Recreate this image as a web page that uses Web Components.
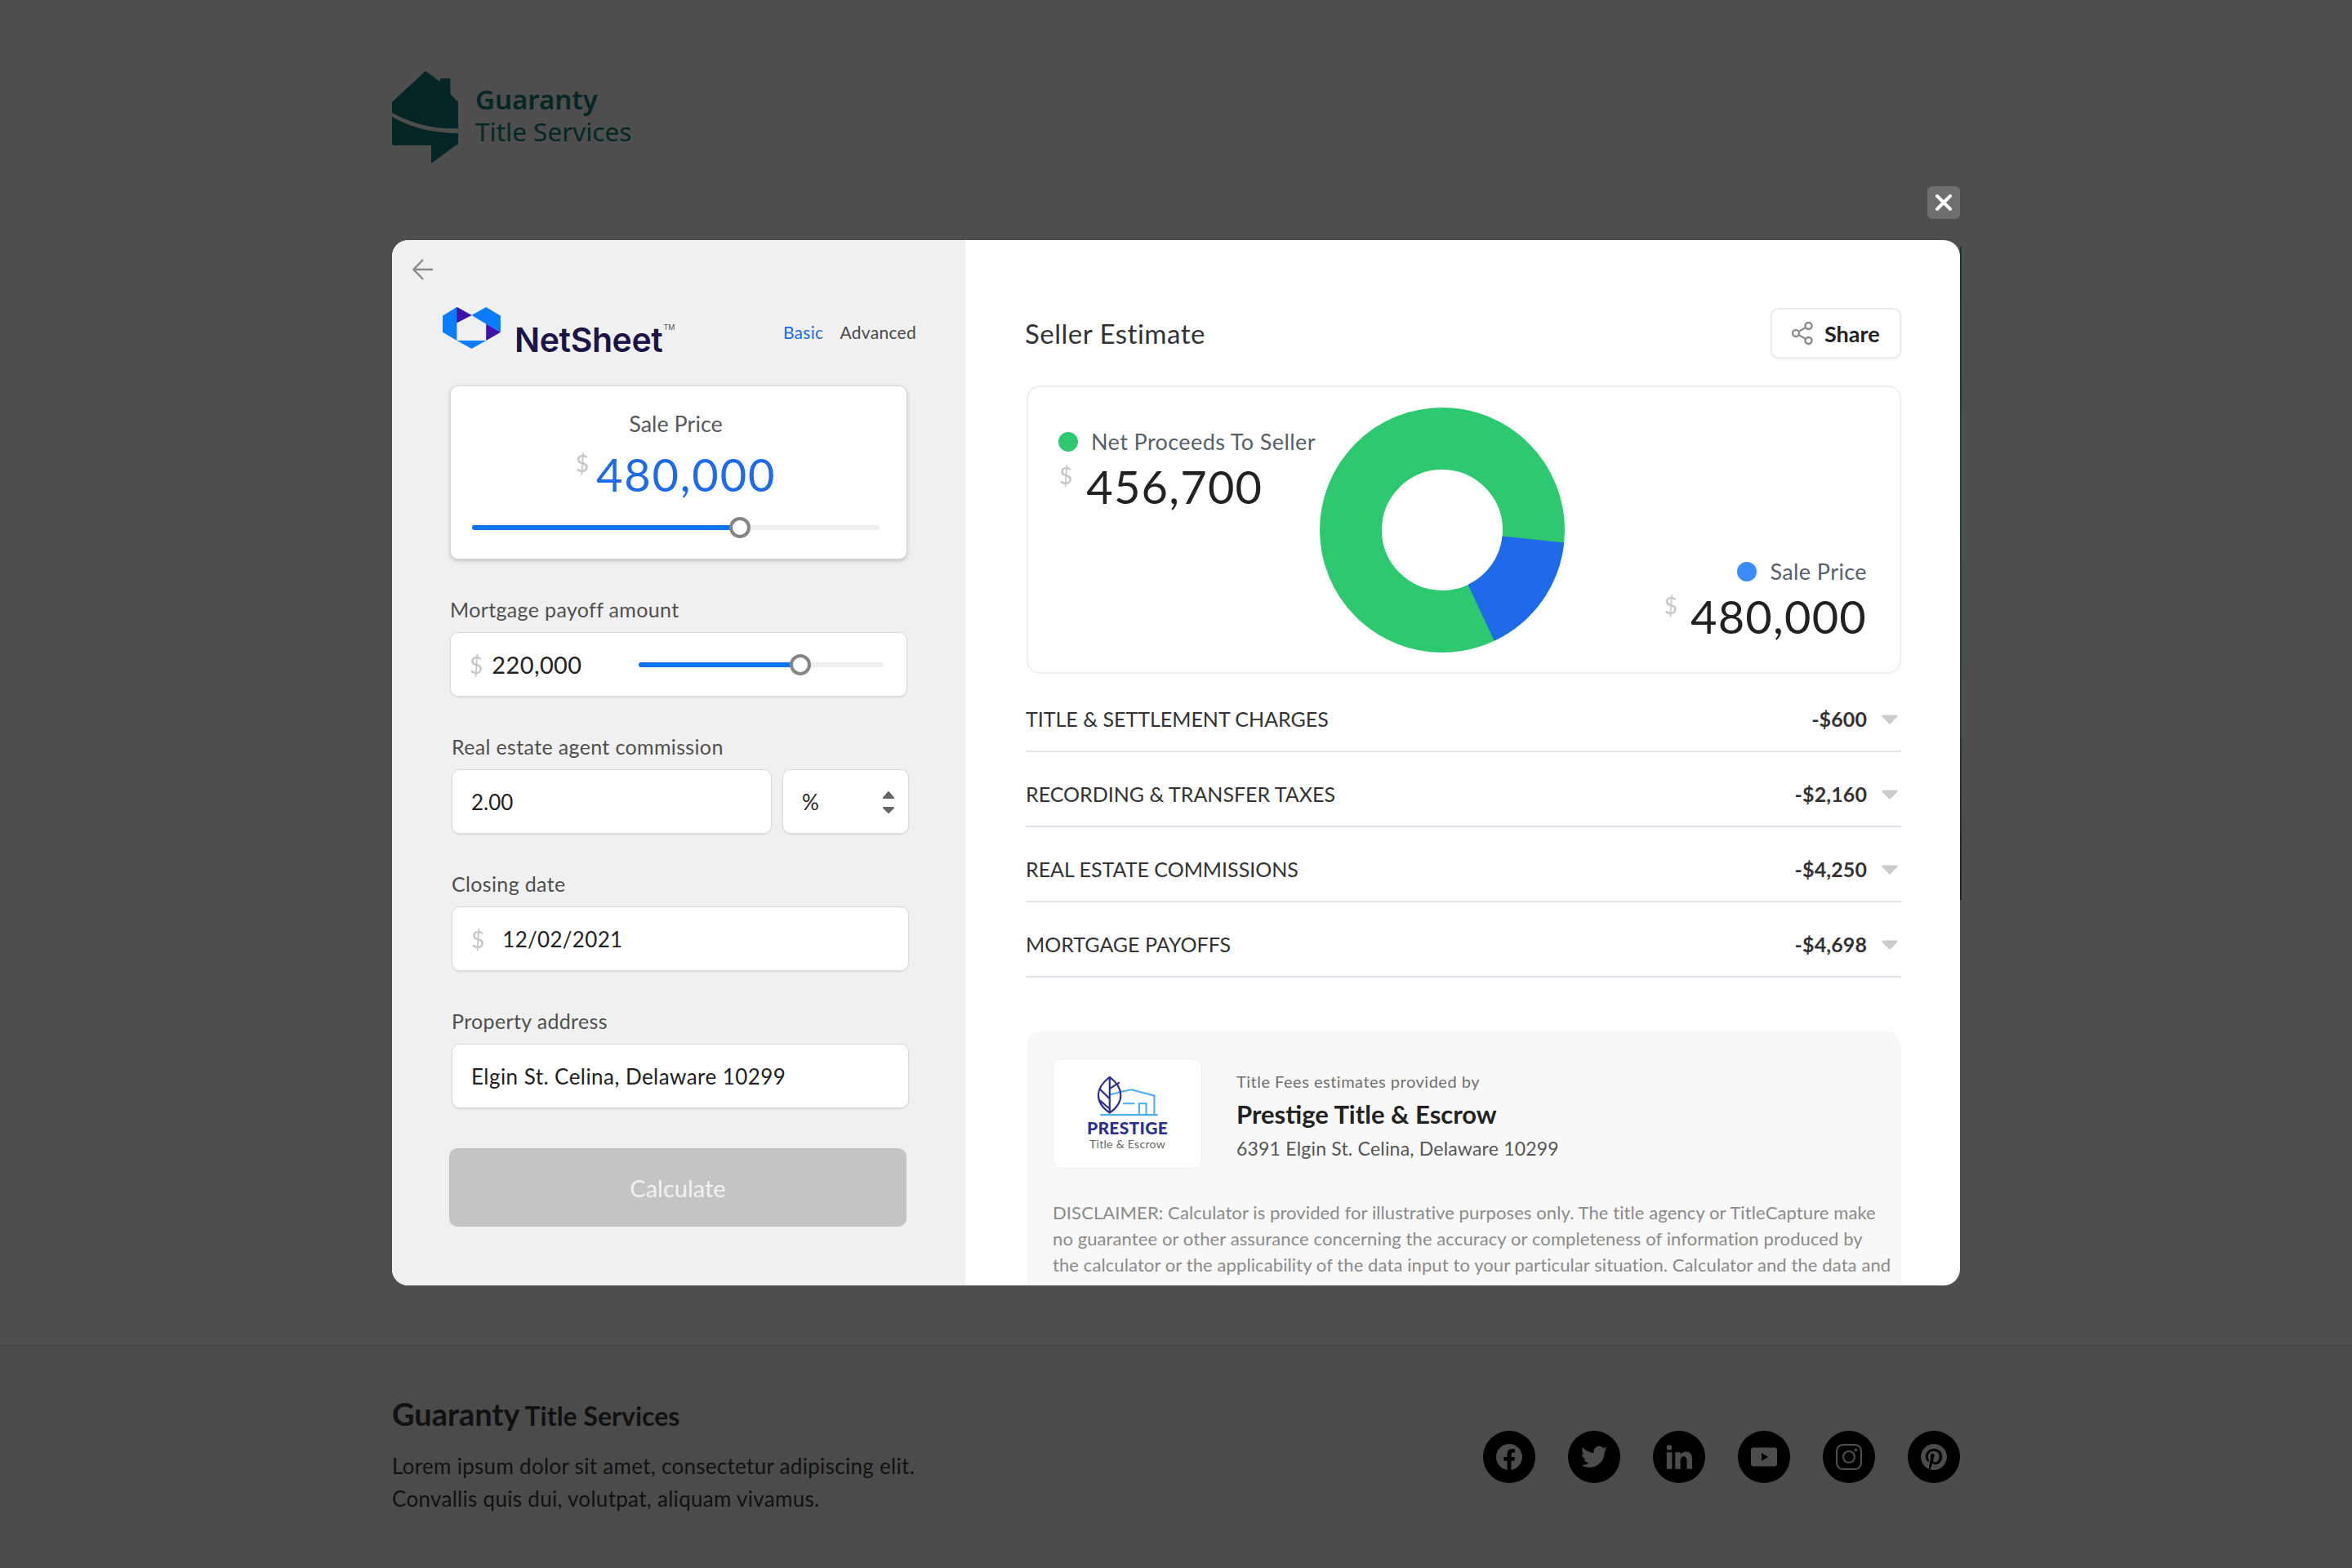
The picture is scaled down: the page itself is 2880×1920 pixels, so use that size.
<!DOCTYPE html>
<html lang="en">
<head>
<meta charset="utf-8">
<title>NetSheet</title>
<style>
  html, body { margin: 0; padding: 0; }
  body { background: #4e4e4e; font-family: "Lato", "Liberation Sans", sans-serif; width: 2880px; height: 1920px; overflow: hidden; }
</style>
</head>
<body>
<site-header></site-header>
<net-modal>
  <calc-panel slot="left"></calc-panel>
  <estimate-panel slot="right"></estimate-panel>
</net-modal>
<site-footer></site-footer>

<script>
// top of the page behind the modal
class SiteHeader extends HTMLElement {
  constructor() {
    super();
    this.attachShadow({ mode: 'open' });
  }
  connectedCallback() {
    this.shadowRoot.innerHTML = `
      <style>
        :host { display: flex; box-sizing: border-box; width: 1920px; height: 294px; margin: 0 auto; padding-top: 87px; }
        svg.logo { display: block; width: 81px; height: 113px; }
        .name { margin: 15px 0 0 21px; font-family: "Noto Sans", sans-serif; color: #052624; line-height: 39px; }
        .name b { display: block; font-size: 33px; font-weight: 600; }
        .name span { display: block; font-size: 31.5px; font-weight: 400; }
        .close { margin: auto 0 26px auto; width: 40px; height: 40px; border-radius: 6px; background: #6f6f6f; display: flex; align-items: center; justify-content: center; }
      </style>
      <svg class="logo" viewBox="0 0 81 113">
        <path fill="#052624" d="M41 0 59 13V10a1 1 0 0 1 1-1H70a1.500 1.500 0 0 1 1.500 1.500V28L81 38V70C60 71 30 68 0 51V38Z"/>
        <path fill="#052624" d="M0 56C30 73 60 76 81 76V88a3 3 0 0 1-3 3L48 113V91H3a3 3 0 0 1-3-3Z"/>
      </svg>
      <div class="name"><b>Guaranty</b><span>Title Services</span></div>
      <div class="close">
        <svg width="20" height="20" viewBox="0 0 20 20"><path d="M2 2 18 18M18 2 2 18" stroke="#fff" stroke-width="4" stroke-linecap="round"/></svg>
      </div>
    `;
  }
}
customElements.define('site-header', SiteHeader);

// the white two column dialog
class NetModal extends HTMLElement {
  constructor() {
    super();
    this.attachShadow({ mode: 'open' });
  }
  connectedCallback() {
    this.shadowRoot.innerHTML = `
      <style>
        :host { display: block; position: relative; width: 1920px; height: 1280px; margin: 0 auto; }
        .box { display: flex; height: 100%; border-radius: 20px; overflow: hidden; background: #fff; }
        .left { flex: 0 0 702px; background: #f0f0f0; }
        .right { flex: 1; min-width: 0; }
        .sliver { position: absolute; left: 100%; top: 8px; width: 2px; height: 800px; background: linear-gradient(#1b3634, #2f4341 60%, #262626); }
      </style>
      <div class="box">
        <div class="left"><slot name="left"></slot></div>
        <div class="right"><slot name="right"></slot></div>
      </div>
      <div class="sliver"></div>
    `;
  }
}
customElements.define('net-modal', NetModal);

class RangeSlider extends HTMLElement {
  constructor() {
    super();
    this.attachShadow({ mode: 'open' });
  }
  connectedCallback() {
    const value = this.getAttribute('value');
    this.shadowRoot.innerHTML = `
      <style>
        :host { display: block; position: relative; height: 6px; border-radius: 3px; background: #eeeeee; }
        .fill { height: 100%; width: ${value}%; border-radius: 3px; background: #0d74f0; }
        .thumb { position: absolute; left: ${value}%; top: 50%; box-sizing: border-box; width: 26px; height: 26px; margin: -13px 0 0 -13px; border: 4px solid #858585; border-radius: 50%; background: #fff; }
      </style>
      <div class="fill"></div>
      <div class="thumb"></div>
    `;
  }
}
customElements.define('range-slider', RangeSlider);

// labelled white input box, content passed through the slot
class FormField extends HTMLElement {
  constructor() {
    super();
    this.attachShadow({ mode: 'open' });
  }
  connectedCallback() {
    this.shadowRoot.innerHTML = `
      <style>
        :host { display: block; margin-top: 46px; }
        .label { font-size: 25px; line-height: 30px; margin-bottom: 13px; color: #4f4f4f; letter-spacing: .35px; }
        .row { display: flex; gap: 13px; }
      </style>
      <div class="label">${this.getAttribute('label')}</div>
      <div class="row"><slot></slot></div>
    `;
  }
}
customElements.define('form-field', FormField);

class InputBox extends HTMLElement {
  constructor() {
    super();
    this.attachShadow({ mode: 'open' });
  }
  connectedCallback() {
    this.shadowRoot.innerHTML = `
      <style>
        :host { flex: 1; box-sizing: border-box; display: flex; align-items: center; height: 79px; padding: 0 23px; border: 1px solid #d9d9d9; border-radius: 10px; background: #fff; box-shadow: 0 1px 2px rgba(0,0,0,.08); font-size: 26px; color: #222; }
      </style>
      <slot></slot>
    `;
  }
}
customElements.define('input-box', InputBox);

class CalcPanel extends HTMLElement {
  constructor() {
    super();
    this.attachShadow({ mode: 'open' });
  }
  connectedCallback() {
    this.shadowRoot.innerHTML = `
      <style>
        :host { display: block; box-sizing: border-box; height: 1280px; padding: 23px 71px 0 71px; }
        .back { display: block; width: 26px; height: 26px; margin-left: -46px; }
        .brand { display: flex; align-items: flex-start; height: 51px; margin: 33px -11px 0 -9px; }
        .brand svg { width: 71px; height: 51px; flex: none; }
        .word { margin-left: 17px; font-family: "Inter", sans-serif; font-size: 41px; line-height: 50px; font-weight: 600; color: #1b1446; letter-spacing: -.4px; }
        .tm { font-size: 9px; font-weight: 400; color: #555; vertical-align: 27px; letter-spacing: 0; margin-left: 1px; }
        .tabs { margin-left: auto; display: flex; gap: 20px; padding-top: 18px; font-size: 21px; line-height: 26px; letter-spacing: .3px; color: #4a4a4a; }
        .tabs .on { color: #1f6aeb; }
        .sale { box-sizing: border-box; height: 213px; margin-top: 45px; padding: 30px 33px 0 26px; border: 1px solid #d6d6d6; border-radius: 10px; background: #fff; box-shadow: 0 2px 5px rgba(0,0,0,.2); text-align: center; }
        .sale .t { font-size: 27px; line-height: 32px; color: #55595c; }
        .sale .v { display: flex; justify-content: center; margin-top: 13px; font-size: 56px; line-height: 66px; color: #1f6aeb; letter-spacing: 1.8px; }
        .cur { color: #c6c6c6; font-weight: 400; letter-spacing: 0; }
        .sale .cur { font-size: 28px; line-height: 34px; margin: 2px 9px 0 0; }
        .sale range-slider { margin-top: 29px; }
        .inner-cur { font-size: 28px; }
        .field-b { margin-left: 2px; margin-right: -2px; }
        .amount { font-size: 29px; margin-left: 11px; width: 180px; letter-spacing: .4px; }
        .flexslider { flex: 1; margin-right: 5px; }
        .unit { flex: 0 0 155px; padding-right: 16px; }
        .unit svg { margin-left: auto; }
        .date { margin-left: 22px; letter-spacing: .3px; }
        .addr { letter-spacing: .45px; }
        .calc { box-sizing: border-box; height: 96px; margin: 49px 0 0 -1px; width: 560px; display: flex; align-items: center; justify-content: center; border-radius: 10px; background: #c4c4c4; color: #f2f2f2; font-size: 29px; }
      </style>
      <svg class="back" viewBox="0 0 26 26"><path d="M25 13H2M13 1 1.500 13 13 25" fill="none" stroke="#8a8a8a" stroke-width="2.400"/></svg>
      <div class="brand">
        <svg viewBox="36 48 212 152">
          <path fill="#0a7cff" d="M88 48 36 80V140L88 170 142 200 195 170 195 110 248 140V80L195 48 142 78Z"/>
          <path fill="#f0f0f0" d="M88 105 142 78 195 110V170H88Z"/>
          <path fill="#3d12a8" d="M88 48 142 78 88 105ZM195 110 248 140 195 170Z"/>
        </svg>
        <div class="word">NetSheet<span class="tm">TM</span></div>
        <div class="tabs"><span class="on">Basic</span><span>Advanced</span></div>
      </div>
      <div class="sale">
        <div class="t">Sale Price</div>
        <div class="v"><span class="cur">$</span><span>480,000</span></div>
        <range-slider value="65.8"></range-slider>
      </div>
      <form-field label="Mortgage payoff amount">
        <input-box>
          <span class="cur inner-cur">$</span>
          <span class="amount">220,000</span>
          <range-slider class="flexslider" value="66"></range-slider>
        </input-box>
      </form-field>
      <form-field class="field-b" label="Real estate agent commission">
        <input-box>2.00</input-box>
        <input-box class="unit">%
          <svg width="16" height="28" viewBox="0 0 16 28"><path d="M8 2 14 9H2ZM2 21H14L8 27Z" fill="#666" stroke="#666" stroke-width="2" stroke-linejoin="round"/></svg>
        </input-box>
      </form-field>
      <form-field class="field-b" label="Closing date">
        <input-box><span class="cur inner-cur">$</span><span class="date">12/02/2021</span></input-box>
      </form-field>
      <form-field class="field-b" label="Property address">
        <input-box><span class="addr">Elgin St. Celina, Delaware 10299</span></input-box>
      </form-field>
      <div class="calc">Calculate</div>
    `;
  }
}
customElements.define('calc-panel', CalcPanel);

class DonutCard extends HTMLElement {
  constructor() {
    super();
    this.attachShadow({ mode: 'open' });
  }
  connectedCallback() {
    this.shadowRoot.innerHTML = `
      <style>
        :host { display: flex; box-sizing: border-box; height: 353px; padding: 25px 40px 25px 37px; border: 2px solid #efefef; border-radius: 16px; background: #fff; }
        .tag { display: flex; align-items: center; gap: 16px; font-size: 27px; line-height: 32px; color: #57606a; letter-spacing: .4px; }
        .dot { width: 24px; height: 24px; border-radius: 50%; }
        .num { display: flex; font-size: 56px; line-height: 66px; color: #222; letter-spacing: 1.2px; }
        .cur { font-size: 28px; line-height: 34px; color: #c6c6c6; letter-spacing: 0; }
        .net { flex: 0 0 320px; padding-top: 26px; }
        .net .num { margin-top: 6px; }
        .net .cur { margin: 2px 17px 0 1px; }
        svg { flex: none; width: 300px; height: 300px; }
        .sale { margin-left: auto; align-self: flex-end; padding-bottom: 10px; }
        .sale .tag { justify-content: flex-end; }
        .sale .cur { margin: 2px 16px 0 0; }
        .sale .num { margin-top: 6px; }
      </style>
      <div class="net">
        <div class="tag"><span class="dot" style="background:#2dc86f"></span>Net Proceeds To Seller</div>
        <div class="num"><span class="cur">$</span><span>456,700</span></div>
      </div>
      <svg viewBox="0 0 300 300">
        <circle cx="150" cy="150" r="112" fill="none" stroke="#2dc86f" stroke-width="76"/>
        <path fill="#1f6aeb" d="M299.200 165.400A150 150 0 0 1 213.800 285.700L181.500 216.900A74 74 0 0 0 223.600 157.600Z"/>
      </svg>
      <div class="sale">
        <div class="tag"><span class="dot" style="background:#3b8cf7"></span>Sale Price</div>
        <div class="num"><span class="cur">$</span><span>480,000</span></div>
      </div>
    `;
  }
}
customElements.define('donut-card', DonutCard);

class FeeRow extends HTMLElement {
  constructor() {
    super();
    this.attachShadow({ mode: 'open' });
  }
  connectedCallback() {
    this.shadowRoot.innerHTML = `
      <style>
        :host { display: flex; box-sizing: border-box; height: 92px; padding-top: 36px; border-bottom: 2px solid #e3e3ef; font-size: 25px; line-height: 30px; color: #333; }
        .amt { margin-left: auto; font-weight: 700; letter-spacing: .1px; }
        svg { margin: 10px 4px 0 18px; }
      </style>
      <slot></slot>
      <span class="amt">${this.getAttribute('amount')}</span>
      <svg width="20" height="12" viewBox="0 0 20 12"><path d="M2 2H18L10 10Z" fill="#ccc" stroke="#ccc" stroke-width="3" stroke-linejoin="round"/></svg>
    `;
  }
}
customElements.define('fee-row', FeeRow);

class ProviderCard extends HTMLElement {
  constructor() {
    super();
    this.attachShadow({ mode: 'open' });
  }
  connectedCallback() {
    this.shadowRoot.innerHTML = `
      <style>
        :host { display: block; box-sizing: border-box; margin-top: 65px; height: 400px; padding: 34px 32px 0; border-radius: 20px; background: #f8f8f8; }
        .top { display: flex; }
        .logo { box-sizing: border-box; flex: 0 0 183px; height: 135px; padding-top: 20px; border: 1px solid #eeeeee; border-radius: 12px; background: #fff; display: flex; flex-direction: column; align-items: center; }
        .logo svg { display: block; width: 84px; height: 50px; }
        .logo b { font-size: 21px; line-height: 22px; font-weight: 900; color: #2c2f8c; margin-top: 3px; letter-spacing: .3px; }
        .logo span { font-size: 14px; line-height: 17px; color: #666; letter-spacing: .3px; }
        .who { margin-left: 42px; padding-top: 14px; }
        .by { font-size: 20px; line-height: 28px; color: #6f6f6f; letter-spacing: .5px; }
        .name { font-size: 31px; line-height: 40px; font-weight: 700; color: #222; margin-top: 6px; }
        .addr { font-size: 23px; line-height: 30px; color: #555; margin-top: 7px; letter-spacing: .2px; }
        p { margin: 38px 0 0; font-size: 22px; line-height: 32px; color: #8a8a8a; letter-spacing: .1px; white-space: nowrap; }
      </style>
      <div class="top">
        <div class="logo">
          <svg viewBox="205 108 248 162">
            <path d="M220 264H448M258 184 304 172 344 164 434 188V262M310 219H356M374 262V219H402V262" fill="none" stroke="#4aaef0" stroke-width="7"/>
            <path d="M257 114C285 135 301 160 301 186 301 212 285 237 257 256 229 237 212 212 212 186 212 160 229 135 257 114ZM257 114V256M216 160 257 200M216 205 257 240M257 160 296 135" fill="none" stroke="#2c2f8c" stroke-width="7" stroke-linejoin="round"/>
          </svg>
          <b>PRESTIGE</b>
          <span>Title &amp; Escrow</span>
        </div>
        <div class="who">
          <div class="by">Title Fees estimates provided by</div>
          <div class="name">Prestige Title &amp; Escrow</div>
          <div class="addr">6391 Elgin St. Celina, Delaware 10299</div>
        </div>
      </div>
      <p>DISCLAIMER: Calculator is provided for illustrative purposes only. The title agency or TitleCapture make<br>no guarantee or other assurance concerning the accuracy or completeness of information produced by<br>the calculator or the applicability of the data input to your particular situation. Calculator and the data and</p>
    `;
  }
}
customElements.define('provider-card', ProviderCard);

class EstimatePanel extends HTMLElement {
  constructor() {
    super();
    this.attachShadow({ mode: 'open' });
  }
  connectedCallback() {
    this.shadowRoot.innerHTML = `
      <style>
        :host { display: block; box-sizing: border-box; height: 1280px; padding: 83px 72px 0 75px; overflow: hidden; }
        .head { display: flex; align-items: center; height: 62px; margin-bottom: 33px; }
        h2 { margin: 0 0 0 -2px; font-size: 33px; line-height: 40px; font-weight: 400; color: #333; letter-spacing: .5px; }
        .share { margin-left: auto; box-sizing: border-box; width: 160px; height: 62px; display: flex; align-items: center; gap: 14px; padding-left: 24px; border: 2px solid #ececec; border-radius: 10px; box-shadow: 0 1px 3px rgba(0,0,0,.08); font-size: 27px; font-weight: 700; color: #222; }
        .rows { margin: 4px 0 0 -1px; }
      </style>
      <div class="head">
        <h2>Seller Estimate</h2>
        <div class="share">
          <svg width="26" height="30" viewBox="0 0 26 30"><g fill="none" stroke="#8e8e8e" stroke-width="2.500"><circle cx="5" cy="15" r="4"/><circle cx="20.500" cy="6" r="4"/><circle cx="20.500" cy="24" r="4"/><path d="M8.500 13 17 8M8.500 17 17 22"/></g></svg>
          Share
        </div>
      </div>
      <donut-card></donut-card>
      <div class="rows">
        <fee-row amount="-$600">TITLE &amp; SETTLEMENT CHARGES</fee-row>
        <fee-row amount="-$2,160">RECORDING &amp; TRANSFER TAXES</fee-row>
        <fee-row amount="-$4,250">REAL ESTATE COMMISSIONS</fee-row>
        <fee-row amount="-$4,698">MORTGAGE PAYOFFS</fee-row>
      </div>
      <provider-card></provider-card>
    `;
  }
}
customElements.define('estimate-panel', EstimatePanel);

class SocialIcon extends HTMLElement {
  constructor() {
    super();
    this.attachShadow({ mode: 'open' });
  }
  connectedCallback() {
    this.shadowRoot.innerHTML = `
      <style>
        :host { display: flex; align-items: center; justify-content: center; width: 64px; height: 64px; border-radius: 50%; background: #000; }
        ::slotted(svg) { display: block; width: 32px; height: 32px; fill: #4c4c4c; }
      </style>
      <slot></slot>
    `;
  }
}
customElements.define('social-icon', SocialIcon);

class SiteFooter extends HTMLElement {
  constructor() {
    super();
    this.attachShadow({ mode: 'open' });
  }
  connectedCallback() {
    this.shadowRoot.innerHTML = `
      <style>
        :host { display: block; height: 273px; margin-top: 73px; border-top: 1px solid #434343; background: #4b4b4b; }
        .in { display: flex; width: 1920px; margin: 0 auto; color: #111; }
        .txt { padding-top: 60px; }
        .ttl { font-size: 38px; line-height: 46px; font-weight: 700; }
        .ttl span { font-size: 32px; margin-left: 6px; }
        p { margin: 18px 0 0; font-size: 26px; line-height: 40px; letter-spacing: .3px; }
        .icons { margin: 104px 0 0 auto; display: flex; gap: 40px; }
      </style>
      <div class="in">
        <div class="txt">
          <div class="ttl">Guaranty<span>Title Services</span></div>
          <p>Lorem ipsum dolor sit amet, consectetur adipiscing elit.<br>Convallis quis dui, volutpat, aliquam vivamus.</p>
        </div>
        <div class="icons"><slot></slot></div>
      </div>
    `;
  }
}
customElements.define('site-footer', SiteFooter);

// footer icons live in the light DOM of the footer
document.querySelector('site-footer').innerHTML = `
  <social-icon><svg viewBox="0 0 24 24"><path d="M24 12.073c0-6.627-5.373-12-12-12s-12 5.373-12 12c0 5.990 4.388 10.954 10.125 11.854v-8.385H7.078v-3.470h3.047V9.430c0-3.007 1.792-4.669 4.533-4.669 1.312 0 2.686.235 2.686.235v2.953H15.830c-1.491 0-1.956.925-1.956 1.874v2.250h3.328l-.532 3.470h-2.796v8.385C19.612 23.027 24 18.062 24 12.073z"/></svg></social-icon>
  <social-icon><svg viewBox="0 0 24 24"><path d="M23.953 4.570a10 10 0 01-2.825.775 4.958 4.958 0 002.163-2.723c-.951.555-2.005.959-3.127 1.184a4.920 4.920 0 00-8.384 4.482C7.690 8.095 4.067 6.130 1.640 3.162a4.822 4.822 0 00-.666 2.475c0 1.710.870 3.213 2.188 4.096a4.904 4.904 0 01-2.228-.616v.060a4.923 4.923 0 003.946 4.827 4.996 4.996 0 01-2.212.085 4.936 4.936 0 004.604 3.417 9.867 9.867 0 01-6.102 2.105c-.390 0-.779-.023-1.170-.067a13.995 13.995 0 007.557 2.209c9.053 0 13.998-7.496 13.998-13.985 0-.210 0-.420-.015-.630A9.935 9.935 0 0024 4.590z"/></svg></social-icon>
  <social-icon><svg viewBox="2.500 2.500 19.500 19"><path d="M6.940 5a2 2 0 1 1-4-.002 2 2 0 0 1 4 .002zM7 8.480H3V21h4V8.480zm6.320 0H9.340V21h3.940v-6.570c0-3.660 4.770-4 4.770 0V21H22v-7.930c0-6.170-7.060-5.940-8.720-2.910l.04-1.680z"/></svg></social-icon>
  <social-icon><svg viewBox="0 0 32 32"><path fill-rule="evenodd" d="M3 4.500H29a3 3 0 0 1 3 3V24.500a3 3 0 0 1-3 3H3a3 3 0 0 1-3-3V7.500a3 3 0 0 1 3-3ZM13 11V21L21 16Z"/></svg></social-icon>
  <social-icon><svg viewBox="0 0 32 32"><g fill="none" stroke="#4c4c4c" stroke-width="2.200"><rect x="1.100" y="1.100" width="29.800" height="29.800" rx="7.500"/><circle cx="16" cy="16" r="7"/></g><circle cx="24.500" cy="7.500" r="1.800"/></svg></social-icon>
  <social-icon><svg viewBox="0 0 24 24"><path d="M12.017 0C5.396 0 .029 5.367.029 11.987c0 5.079 3.158 9.417 7.618 11.162-.105-.949-.199-2.403.041-3.439.219-.937 1.406-5.957 1.406-5.957s-.359-.720-.359-1.781c0-1.663.967-2.911 2.168-2.911 1.024 0 1.518.769 1.518 1.688 0 1.029-.653 2.567-.992 3.992-.285 1.193.6 2.165 1.775 2.165 2.128 0 3.768-2.245 3.768-5.487 0-2.861-2.063-4.869-5.008-4.869-3.410 0-5.409 2.562-5.409 5.199 0 1.033.394 2.143.889 2.741.099.120.112.225.085.345-.090.375-.293 1.199-.334 1.363-.053.225-.172.271-.401.165-1.495-.690-2.433-2.878-2.433-4.646 0-3.776 2.748-7.252 7.920-7.252 4.158 0 7.392 2.967 7.392 6.923 0 4.135-2.607 7.462-6.233 7.462-1.214 0-2.354-.629-2.758-1.379l-.749 2.848c-.269 1.045-1.004 2.352-1.498 3.146 1.123.345 2.306.535 3.550.535 6.607 0 11.985-5.365 11.985-11.987C23.970 5.390 18.592.026 11.985.026L12.017 0z"/></svg></social-icon>
`;
</script>
</body>
</html>
